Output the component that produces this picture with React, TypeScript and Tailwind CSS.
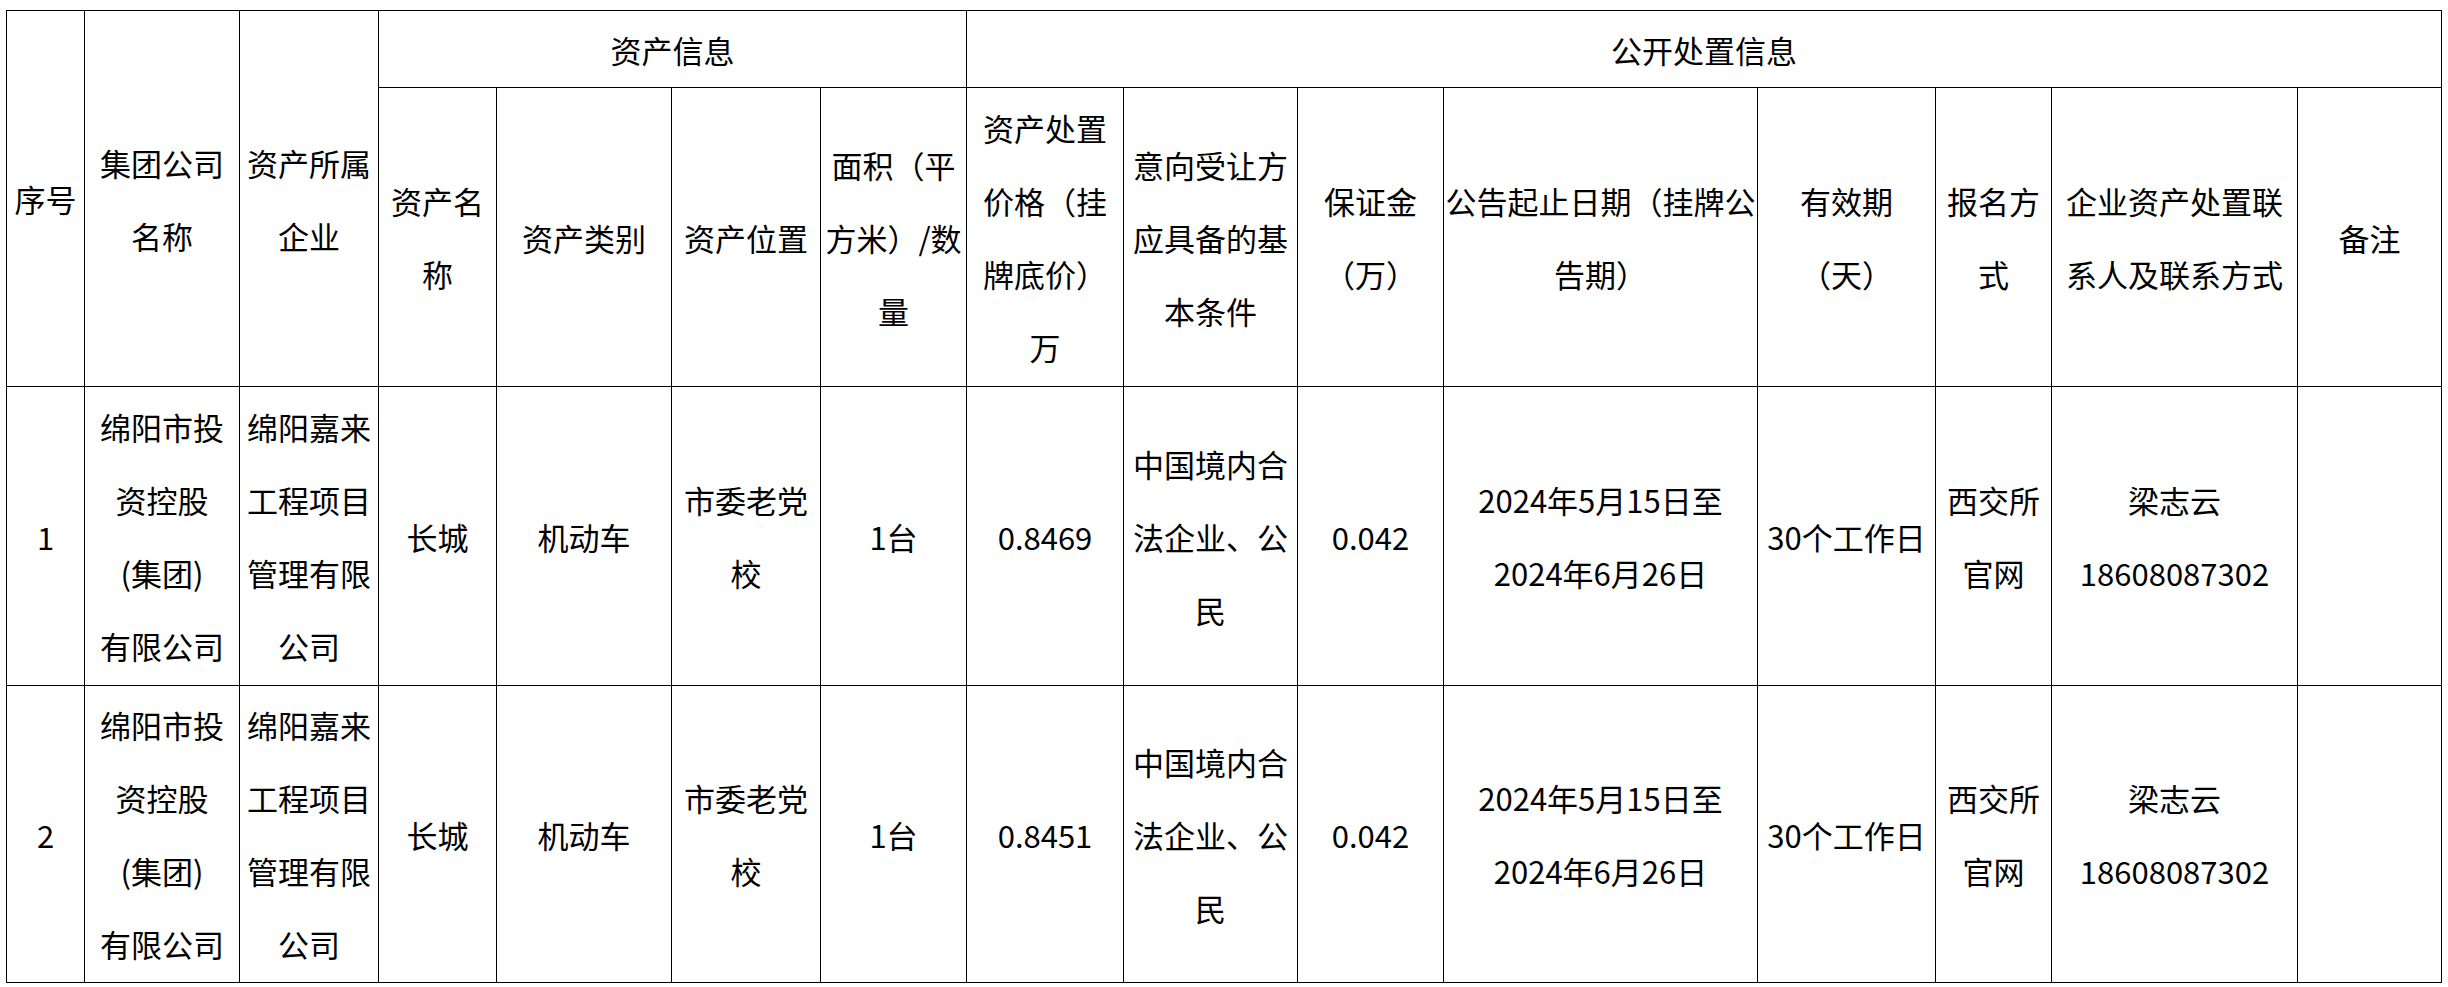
import React from "react";

type Cell = { lines: string[]; span?: string };

const header2: string[][] = [
  ["资产名", "称"],
  ["资产类别"],
  ["资产位置"],
  ["面积（平", "方米）/数", "量"],
  ["资产处置", "价格（挂", "牌底价）", "万"],
  ["意向受让方", "应具备的基", "本条件"],
  ["保证金", "（万）"],
  ["公告起止日期（挂牌公", "告期）"],
  ["有效期", "（天）"],
  ["报名方", "式"],
  ["企业资产处置联", "系人及联系方式"],
  ["备注"],
];

const makeRow = (no: string, price: string): string[][] => [
  [no],
  ["绵阳市投", "资控股", "(集团)", "有限公司"],
  ["绵阳嘉来", "工程项目", "管理有限", "公司"],
  ["长城"],
  ["机动车"],
  ["市委老党", "校"],
  ["1台"],
  [price],
  ["中国境内合", "法企业、公", "民"],
  ["0.042"],
  ["2024年5月15日至", "2024年6月26日"],
  ["30个工作日"],
  ["西交所", "官网"],
  ["梁志云", "18608087302"],
  [],
];

function Td({ lines, span = "" }: Cell) {
  return (
    <div
      className={`bg-white flex flex-col items-center justify-center text-center whitespace-nowrap text-black text-[31px] leading-[73px] ${span}`}
    >
      {lines.map((l, i) => (
        <div key={i}>{l}</div>
      ))}
    </div>
  );
}

export default function App() {
  const rows = [makeRow("1", "0.8469"), makeRow("2", "0.8451")];
  return (
    <div className="min-h-screen bg-white pl-[6px] pt-[10px] font-['Noto_Sans_CJK_SC','Noto_Sans',sans-serif]">
      <div className="inline-grid grid-cols-[77px_154px_138px_117px_174px_148px_145px_156px_173px_145px_313px_177px_115px_245px_143px] grid-rows-[76px_298px_298px_296px] gap-px p-px bg-black">
        <Td lines={["序号"]} span="row-span-2" />
        <Td lines={["集团公司", "名称"]} span="row-span-2" />
        <Td lines={["资产所属", "企业"]} span="row-span-2" />
        <Td lines={["资产信息"]} span="col-span-4" />
        <Td lines={["公开处置信息"]} span="col-span-8" />
        {header2.map((l, i) => (
          <Td key={`h${i}`} lines={l} />
        ))}
        {rows.map((r, ri) =>
          r.map((l, ci) => <Td key={`r${ri}c${ci}`} lines={l} />)
        )}
      </div>
    </div>
  );
}
